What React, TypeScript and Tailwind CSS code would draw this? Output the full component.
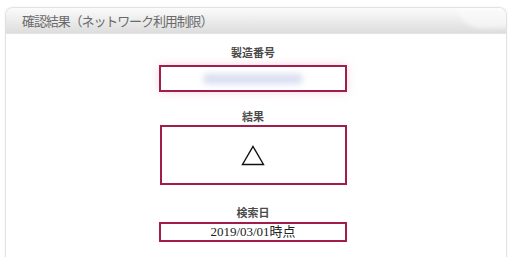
import React from "react";

const serif = { fontFamily: '"Liberation Serif", "Noto Sans CJK JP", serif' };

function Label({ children }: { children: React.ReactNode }) {
  return (
    <div
      className="h-[14px] text-[11px] leading-[14px] font-semibold text-[#4a4a4a] text-center"
      style={serif}
    >
      {children}
    </div>
  );
}

export default function App() {
  return (
    <div className="w-[512px] h-[257px] bg-white overflow-hidden pt-[7px] px-[5px]">
      <div className="h-[260px] border border-[#e2e2e2] border-b-0 rounded-t-[8px] shadow-[0_0_2px_rgba(0,0,0,0.08)] flex flex-col">
        <div className="relative h-[26px] rounded-t-[8px] border-b border-[#e4e4e4] bg-gradient-to-b from-[#fbfbfb] via-[#ececec] to-[#dddddd] flex items-center pl-[16px] overflow-hidden">
          <div className="absolute right-[-20px] top-[-30px] w-[70px] h-[50px] rounded-full bg-gradient-to-b from-transparent to-white/60 blur-[2px]" />
          <span
            className="relative text-[13px] tracking-[-1.1px] text-[#6a6a6a]"
            style={{ fontFamily: '"Noto Sans CJK JP", sans-serif' }}
          >
            確認結果（ネットワーク利用制限）
          </span>
        </div>
        <div className="flex flex-col items-center pt-[12px] pr-[6px]">
          <Label>製造番号</Label>
          <div className="mt-[5px] w-[188px] h-[27px] border-2 border-[#a31d4c] flex items-center justify-center shadow-[0_0_10px_rgba(230,140,170,0.35)]">
            <div className="w-[100px] h-[10px] rounded-full bg-[#cfd5ec] blur-[3px] opacity-80" />
          </div>
          <div className="mt-[18px]">
            <Label>結果</Label>
          </div>
          <div className="mt-[1px] w-[187px] h-[60px] border-2 border-[#a31d4c] flex items-center justify-center">
            <svg width="24" height="21" viewBox="0 0 24 21">
              <path d="M12 1.5 L22.5 19.5 L1.5 19.5 Z" fill="none" stroke="#111" strokeWidth="1.4" strokeLinejoin="miter" />
            </svg>
          </div>
          <div className="mt-[21px]">
            <Label>検索日</Label>
          </div>
          <div
            className="mt-[2px] w-[188px] h-[20px] border-2 border-[#a31d4c] flex items-center justify-center text-[13px] text-[#222]"
            style={serif}
          >
            2019/03/01時点
          </div>
        </div>
      </div>
    </div>
  );
}
